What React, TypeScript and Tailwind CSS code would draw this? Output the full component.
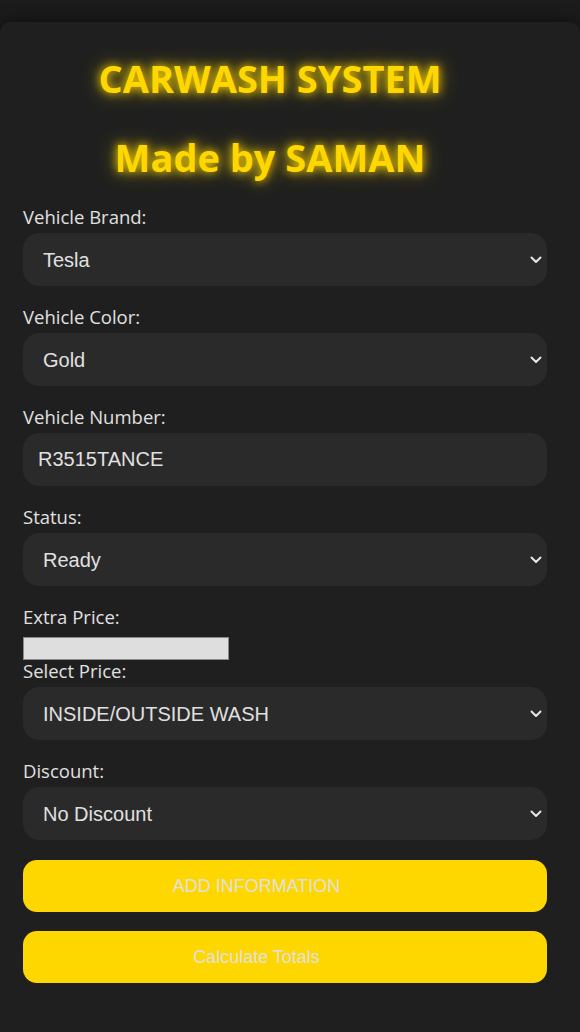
import { useState } from "react";

const labelCls = "block text-[18.5px] leading-[22px] mb-[5px] text-[#e0e0e0] [font-family:'Open_Sans',sans-serif]";
const fieldCls =
  "w-full h-[53px] rounded-[16px] bg-[#2a2a2a] text-[#e0e0e0] text-[20px] outline-none border-0 [font-family:'Liberation_Sans',Arial,sans-serif]";

const Chevron = () => (
  <svg
    className="pointer-events-none absolute right-[5px] top-[23px]"
    width="12"
    height="8"
    viewBox="0 0 12 8"
    fill="none"
  >
    <path d="M1.5 1.5 6 6l4.5-4.5" stroke="#e6e6e6" strokeWidth="2" strokeLinecap="round" strokeLinejoin="round" />
  </svg>
);

function SelectField({ label, value, options }: { label: string; value: string; options: string[] }) {
  const [v, setV] = useState(value);
  return (
    <div className="mb-[20px]">
      <label className={labelCls}>{label}</label>
      <div className="relative">
        <select
          value={v}
          onChange={(e) => setV(e.target.value)}
          className={`${fieldCls} appearance-none pl-[20px] pr-[30px]`}
        >
          {options.map((o) => (
            <option key={o}>{o}</option>
          ))}
        </select>
        <Chevron />
      </div>
    </div>
  );
}

export default function App() {
  return (
    <div className="min-h-screen bg-[#1b1b1b] pt-[22px]">
      <div className="min-h-[1010px] rounded-t-[10px] bg-[#1f1f1f] shadow-[0_0_15px_rgba(0,0,0,0.5)] pl-[23px] pr-[33px] pb-[40px]">
        <div className="pt-[36px] pb-[29px] pr-[30px] text-center text-[#ffd700] font-bold text-[38px] [font-family:'Open_Sans',sans-serif] [text-shadow:0_0_10px_#ffd700,0_0_20px_rgba(255,215,0,0.6)]">
          <h1 className="m-0 leading-[40px] mb-[39px]">CARWASH SYSTEM</h1>
          <h2 className="m-0 leading-[40px]">Made by SAMAN</h2>
        </div>

        <SelectField label="Vehicle Brand:" value="Tesla" options={["Tesla", "BMW", "Audi", "Toyota"]} />
        <SelectField label="Vehicle Color:" value="Gold" options={["Gold", "Black", "White", "Red"]} />

        <div className="mb-[20px]">
          <label className={labelCls}>Vehicle Number:</label>
          <input defaultValue="R3515TANCE" className={`${fieldCls} px-[15px]`} />
        </div>

        <SelectField label="Status:" value="Ready" options={["Ready", "Washing", "Done"]} />

        <div>
          <label className={labelCls}>Extra Price:</label>
          <input className="block w-[206px] h-[23px] bg-[#dedede] border border-[#8a8a8a] mt-[9px]" />
        </div>

        <SelectField
          label="Select Price:"
          value="INSIDE/OUTSIDE WASH"
          options={["INSIDE/OUTSIDE WASH", "OUTSIDE WASH", "INSIDE WASH"]}
        />
        <SelectField label="Discount:" value="No Discount" options={["No Discount", "10%", "20%"]} />

        <div className="flex flex-col gap-[19px]">
          <button className="h-[52px] w-full rounded-[14px] bg-[#ffd700] text-[#e0e0e0] text-[18px] pr-[57px] [font-family:'Liberation_Sans',Arial,sans-serif]">
            ADD INFORMATION
          </button>
          <button className="h-[52px] w-full rounded-[14px] bg-[#ffd700] text-[#e0e0e0] text-[18px] pr-[57px] [font-family:'Liberation_Sans',Arial,sans-serif]">
            Calculate Totals
          </button>
        </div>
      </div>
    </div>
  );
}
